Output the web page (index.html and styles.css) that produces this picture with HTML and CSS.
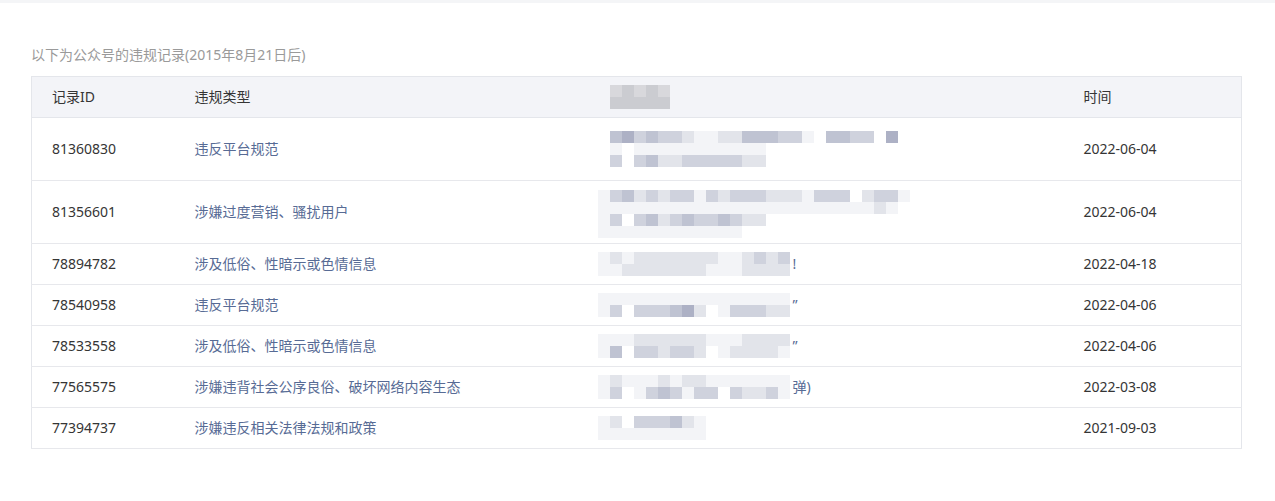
FILE: index.html
```html
<!DOCTYPE html>
<html lang="zh-CN">
<head>
    <meta charset="UTF-8">
    <meta name="viewport" content="width=device-width, initial-scale=1.0">
    <title>违规记录</title>
    <link rel="stylesheet" href="styles.css">
</head>
<body>
<div class="top-bar"></div>

<section class="records">
    <p class="caption">以下为公众号的违规记录(2015年8月21日后)</p>

    <table class="record-table">
        <colgroup>
            <col class="col-id">
            <col class="col-type">
            <col class="col-content">
            <col class="col-time">
        </colgroup>
        <thead>
            <tr>
                <th>记录ID</th>
                <th>违规类型</th>
                <th><div class="mosaic" data-rows="67676|77777"></div></th>
                <th>时间</th>
            </tr>
        </thead>
        <tbody>
            <tr class="tall">
                <td>81360830</td>
                <td class="type">违反平台规范</td>
                <td><div class="mosaic" data-rows="453433211224443310443305|1011111111111|3034223333322"></div></td>
                <td>2022-06-04</td>
            </tr>
            <tr class="tall">
                <td>81356601</td>
                <td class="type">涉嫌过度营销、骚扰用户</td>
                <td><div class="mosaic wide deep" data-rows="13423233132333222133302331|1111111111111111111111121|13034234334322|111111111111"></div></td>
                <td>2022-06-04</td>
            </tr>
            <tr>
                <td>78894782</td>
                <td class="type">涉及低俗、性暗示或色情信息</td>
                <td><div class="line"><div class="mosaic wide" data-rows="1212222222112323|1122222221112222"></div><span class="tail">!</span></div></td>
                <td>2022-04-18</td>
            </tr>
            <tr>
                <td>78540958</td>
                <td class="type">违反平台规范</td>
                <td><div class="line"><div class="mosaic wide" data-rows="1111111111111111|1303334520133322"></div><span class="tail">”</span></div></td>
                <td>2022-04-06</td>
            </tr>
            <tr>
                <td>78533558</td>
                <td class="type">涉及低俗、性暗示或色情信息</td>
                <td><div class="line"><div class="mosaic wide" data-rows="1112222221112222|1403323320122221"></div><span class="tail">”</span></div></td>
                <td>2022-04-06</td>
            </tr>
            <tr>
                <td>77565575</td>
                <td class="type">涉嫌违背社会公序良俗、破坏网络内容生态</td>
                <td><div class="line"><div class="mosaic wide" data-rows="1211121221111111|1301343133032231"></div><span class="tail">弹)</span></div></td>
                <td>2022-03-08</td>
            </tr>
            <tr>
                <td>77394737</td>
                <td class="type">涉嫌违反相关法律法规和政策</td>
                <td><div class="mosaic wide" data-rows="120333421|111111111"></div></td>
                <td>2021-09-03</td>
            </tr>
        </tbody>
    </table>
</section>

<script>
    // blurred column: each digit is one 12px mosaic cell
    document.querySelectorAll('.mosaic').forEach(box => {
        box.dataset.rows.split('|').forEach(row => {
            const line = document.createElement('div');
            line.className = 'mosaic-row';
            row.split('').forEach(shade => {
                const cell = document.createElement('span');
                cell.className = 'cell c' + shade;
                line.appendChild(cell);
            });
            box.appendChild(line);
        });
    });
</script>
</body>
</html>
```

FILE: styles.css
```css
* {
    margin: 0;
    padding: 0;
    box-sizing: border-box;
}
body {
    background: #fff;
    color: #353535;
    font-family: "Noto Sans", "Noto Sans CJK SC", sans-serif;
    font-size: 14px;
}
.top-bar {
    height: 3px;
    background: #f4f5f7;
}
.records {
    padding: 42px 33px 0 31px;
}
.caption {
    color: #9a9a9a;
    line-height: 20px;
    margin-bottom: 11px;
}
.record-table {
    width: 100%;
    border-collapse: collapse;
    table-layout: fixed;
    border: 1px solid #e4e6eb;
}
.col-id { width: 143px; }
.col-type { width: 412px; }
.col-content { width: 477px; }
.record-table th,
.record-table td {
    text-align: left;
    font-weight: normal;
    line-height: 20px;
    height: 41px;
    padding: 0 20px;
    vertical-align: middle;
    white-space: nowrap;
}
.record-table thead tr {
    background: #f3f4f8;
}
.record-table th {
    border-bottom: 1px solid #e4e6eb;
}
.record-table td {
    border-bottom: 1px solid #e7e8ec;
}
.record-table tr.tall td {
    height: 63px;
}
.type {
    color: #576b95;
}
.line {
    display: flex;
    align-items: center;
    height: 20px;
}
.tail {
    color: #576b95;
    margin-left: 3px;
    line-height: 20px;
}
.mosaic {
    display: flex;
    flex-direction: column;
    width: max-content;
    margin-left: 3px;
}
.mosaic.wide {
    margin-left: -9px;
}
.mosaic.deep {
    margin-top: 4px;
}
.mosaic-row {
    display: flex;
}
.cell {
    width: 12px;
    height: 12px;
}
.c0 { background: #ffffff; }
.c1 { background: #f3f4f7; }
.c2 { background: #e2e4ea; }
.c3 { background: #cfd2dd; }
.c4 { background: #bfc3d2; }
.c5 { background: #adb1c5; }
.c6 { background: #d8d8dc; }
.c7 { background: #cbccd1; }
```
